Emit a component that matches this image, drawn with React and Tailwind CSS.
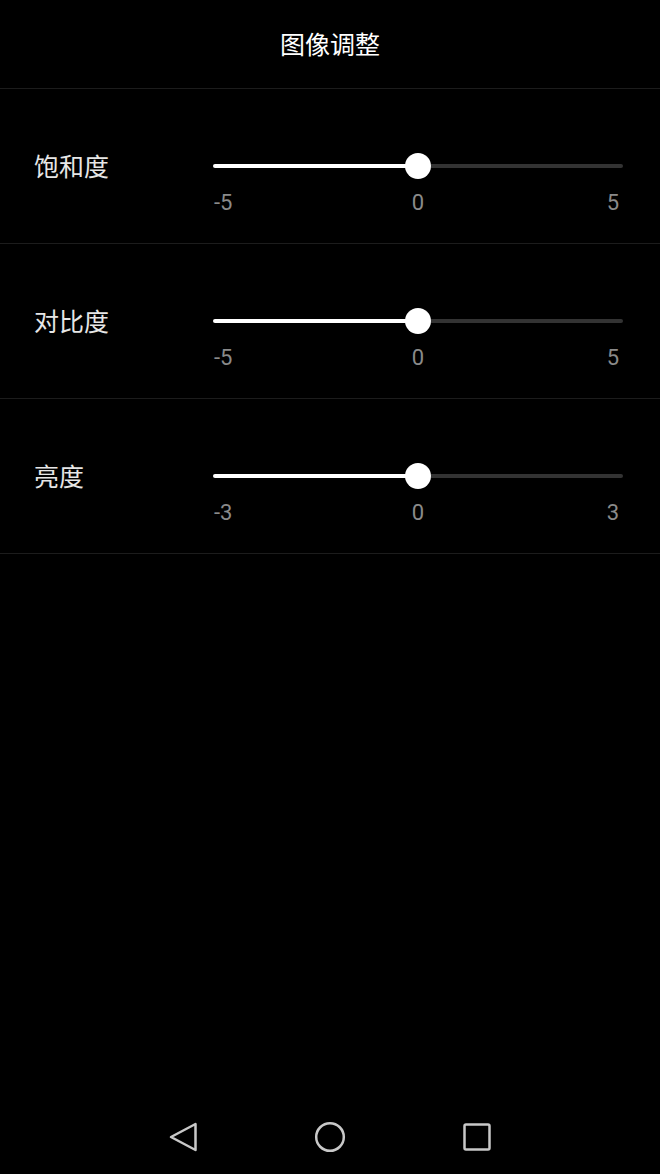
const CJK = { fontFamily: '"Noto Sans CJK SC", "Noto Sans", sans-serif' };

const rows = [
  { label: '饱和度', min: -5, max: 5 },
  { label: '对比度', min: -5, max: 5 },
  { label: '亮度', min: -3, max: 3 },
];

function Slider({ min, max }) {
  return (
    <div className="w-[410px]">
      {/* track + thumb */}
      <div className="relative h-[26px] flex items-center">
        <div className="flex w-full h-[4px] rounded-full overflow-hidden">
          <div className="w-1/2 bg-white" />
          <div className="w-1/2 bg-[#333333]" />
        </div>
        <div className="absolute left-1/2 top-0 -ml-[13px] w-[26px] h-[26px] rounded-full bg-white" />
      </div>
      <div
        className="grid grid-cols-3 mt-[12px] text-[22px] leading-[24px] text-[#8a8a8a]"
        style={{ fontFamily: 'Roboto, "Liberation Sans", sans-serif' }}
      >
        <span className="text-left pl-[1px]">{min}</span>
        <span className="text-center">0</span>
        <span className="text-right pr-[4px]">{max}</span>
      </div>
    </div>
  );
}

export default function App() {
  return (
    <div className="w-[660px] h-[1174px] bg-black flex flex-col" style={CJK}>
      <div className="h-[89px] flex items-center justify-center border-b border-[#1c1c1c]">
        <h1 className="text-[25px] text-white">图像调整</h1>
      </div>

      <div className="flex-1">
        {rows.map((r) => (
          <div key={r.label} className="h-[155px] flex items-start pt-[64px] border-b border-[#1c1c1c]">
            <div className="w-[213px] pl-[34px] text-[25px] leading-[24px] text-[#e6e6e6]">{r.label}</div>
            <Slider min={r.min} max={r.max} />
          </div>
        ))}
      </div>

      {/* system nav bar */}
      <div className="h-[74px] flex items-center justify-center gap-[115px]">
        <svg width="32" height="32" viewBox="0 0 32 32" fill="none" stroke="#c8c8c8" strokeWidth="2.5" strokeLinejoin="round">
          <path d="M4 16 L28.5 3 L28.5 29 Z" />
        </svg>
        <svg width="32" height="32" viewBox="0 0 32 32" fill="none" stroke="#c8c8c8" strokeWidth="2.5">
          <circle cx="16" cy="16" r="13.8" />
        </svg>
        <svg width="32" height="32" viewBox="0 0 32 32" fill="none" stroke="#c8c8c8" strokeWidth="2.5">
          <rect x="3.5" y="3.5" width="25" height="25" rx="1.5" />
        </svg>
      </div>
    </div>
  );
}
